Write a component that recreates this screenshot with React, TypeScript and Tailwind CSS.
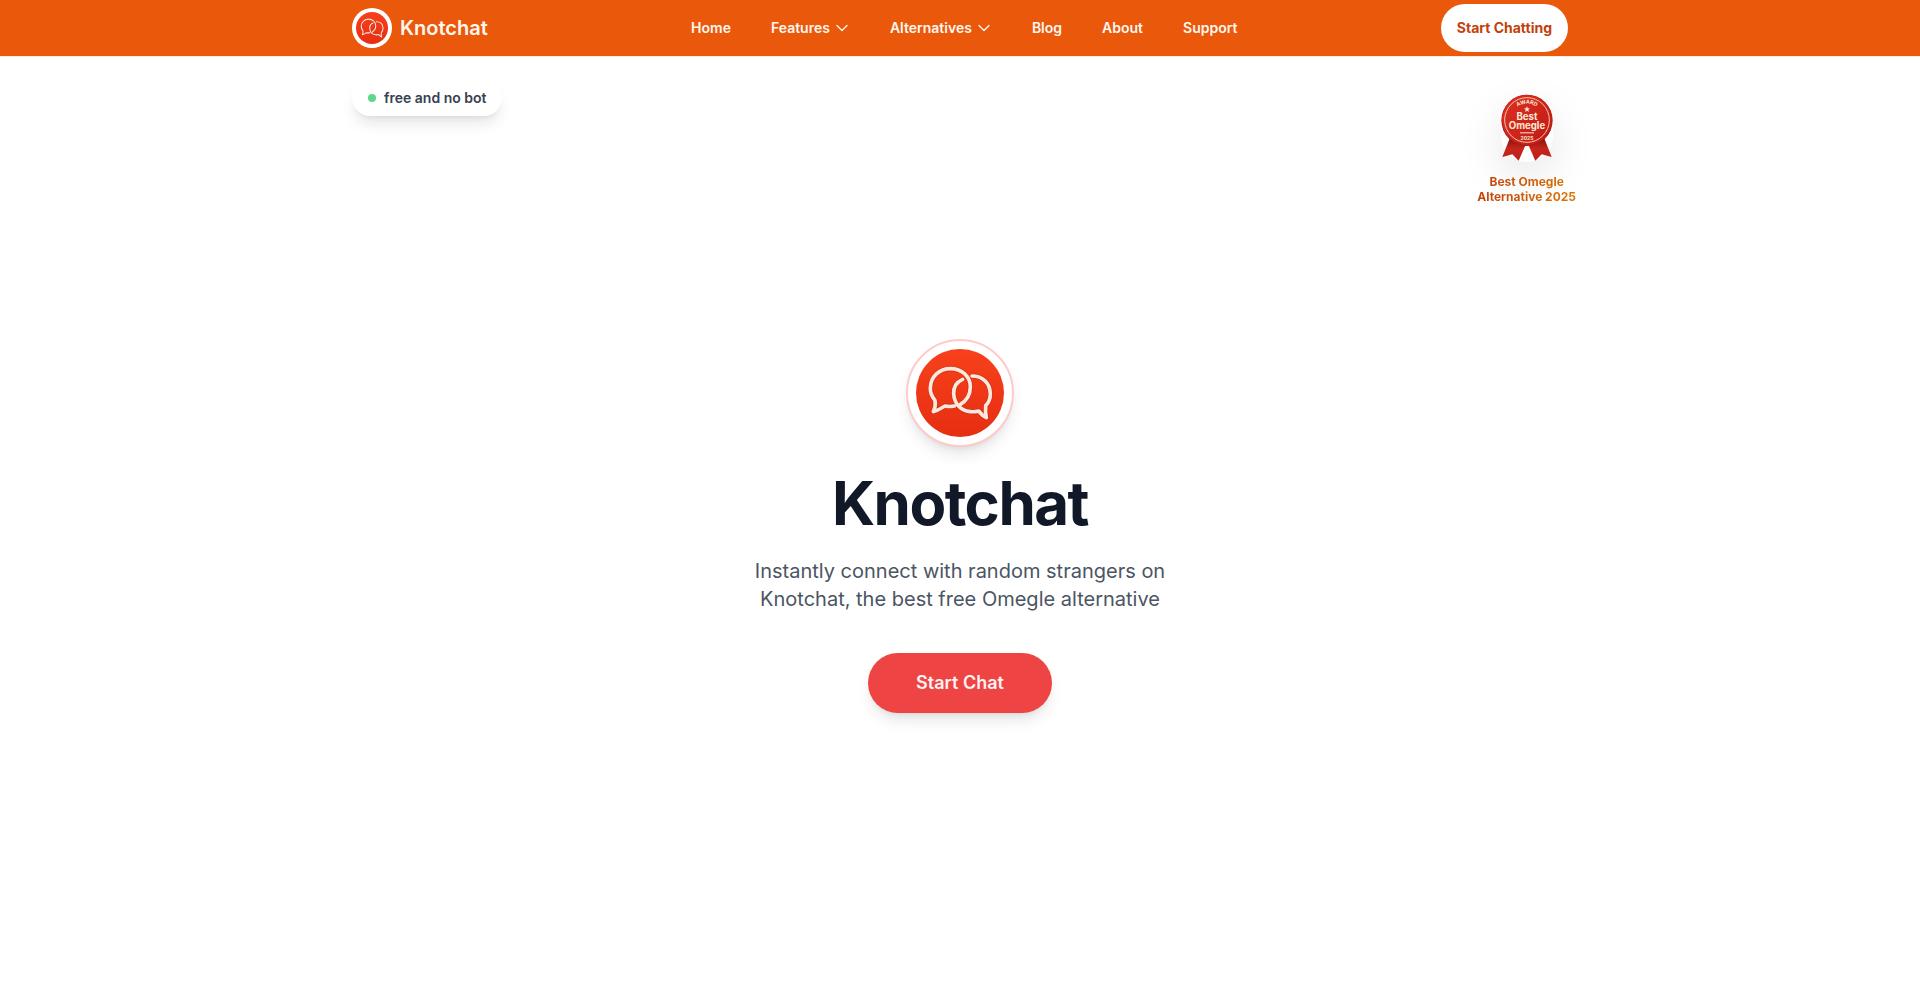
type NavItem = { label: string; menu?: boolean };

const navItems: NavItem[] = [
  { label: "Home" },
  { label: "Features", menu: true },
  { label: "Alternatives", menu: true },
  { label: "Blog" },
  { label: "About" },
  { label: "Support" },
];

function ChevronIcon() {
  return (
    <svg viewBox="0 0 24 24" className="size-4" fill="none" stroke="currentColor" strokeWidth="2" aria-hidden="true">
      <path d="M19.500 8.250 L12 15.750 L4.500 8.250" strokeLinecap="round" strokeLinejoin="round" />
    </svg>
  );
}

function ChatLogo({ id, className, stroke }: { id: string; className: string; stroke: number }) {
  const left =
    "M193 242 C183 244 173 244 165 242 C152 249 142 256 130 259 C136 247 137 235 135 225 C125 213 120 200 121 186 C123 153 148 130 181 130 C216 130 241 154 241 185 C241 207 229 227 210 238";
  const right =
    "M218 162 C200 170 190 186 191 205 C193 237 213 256 240 259 C250 260 258 259 266 257 C273 266 280 273 289 277 C286 265 286 253 287 241 C297 231 301 219 301 205 C300 173 278 152 246 152";
  return (
    <svg viewBox="78 71 264 264" className={className} aria-hidden="true">
      <defs>
        <linearGradient id={id} x1="0" y1="0" x2="0" y2="1">
          <stop offset="0" stopColor="#f8411b" />
          <stop offset="1" stopColor="#e62e12" />
        </linearGradient>
      </defs>
      <circle cx="210" cy="203" r="132" fill={`url(#${id})`} />
      <g fill="none" strokeLinejoin="round" strokeLinecap="round">
        <g stroke="#b3210c" strokeOpacity="0.45" strokeWidth={stroke + 4}>
          <path d={left} />
          <path d={right} />
        </g>
        <g stroke="#fde8dd" strokeWidth={stroke}>
          <path d={left} />
          <path d={right} />
        </g>
      </g>
    </svg>
  );
}

function AwardRibbon() {
  return (
    <svg viewBox="0 0 156 204" className="h-[68px] w-[52px]" role="img" aria-label="Award: Best Omegle 2025">
      <defs>
        <linearGradient id="medal" x1="0" y1="0" x2="1" y2="1">
          <stop offset="0" stopColor="#de3022" />
          <stop offset="1" stopColor="#be1a15" />
        </linearGradient>
        <linearGradient id="tail" x1="0" y1="0" x2="0" y2="1">
          <stop offset="0" stopColor="#7e0d0b" />
          <stop offset="0.5" stopColor="#c8261d" />
          <stop offset="1" stopColor="#bb1d17" />
        </linearGradient>
        <path id="award-arc" d="M29 78 A49 49 0 0 1 127 78" />
      </defs>
      <path d="M28 128 L4 189 L34 181 L53 200 L75 150 Z" fill="url(#tail)" />
      <path d="M128 128 L152 189 L122 181 L103 200 L81 150 Z" fill="url(#tail)" />
      <circle cx="78" cy="79" r="77" fill="#ad1913" />
      <circle cx="78" cy="78" r="75" fill="url(#medal)" />
      <circle cx="78" cy="78" r="67" fill="none" stroke="#f6c9a4" strokeWidth="3" />
      <g fill="#fdebd2" textAnchor="middle" fontFamily="Inter, sans-serif" fontWeight="700">
        <text fontSize="16">
          <textPath href="#award-arc" startOffset="50%">AWARD</textPath>
        </text>
        <path d="M78 37 L80.500 43 L87 43.500 L82 47.500 L83.500 54 L78 50.500 L72.500 54 L74 47.500 L69 43.500 L75.500 43 Z" />
        <text x="78" y="78" fontSize="29">Best</text>
        <text x="78" y="104" fontSize="29">Omegle</text>
        <rect x="57" y="115" width="42" height="3" />
        <text x="78" y="137" fontSize="15">2025</text>
      </g>
    </svg>
  );
}

export default function App() {
  return (
    <div className="flex min-h-screen flex-col bg-white font-[Inter,sans-serif]">
      <header className="bg-[#ea580c] shadow-[0_1px_0_#ffedd5]">
        <div className="mx-auto flex h-14 max-w-7xl items-center justify-between px-8">
          <a href="#home" className="flex items-center gap-2">
            <span className="rounded-full bg-white p-1">
              <ChatLogo id="logo-small" className="size-8" stroke={9} />
            </span>
            <span className="text-xl font-semibold text-[#fff7ed]">Knotchat</span>
          </a>
          <nav aria-label="Main" className="flex items-center gap-10 text-sm font-semibold text-[#fff7ed]">
            {navItems.map((item) =>
              item.menu ? (
                <button key={item.label} type="button" className="flex items-center gap-1">
                  {item.label}
                  <ChevronIcon />
                </button>
              ) : (
                <a key={item.label} href={`#${item.label.toLowerCase()}`}>
                  {item.label}
                </a>
              ),
            )}
          </nav>
          <button type="button" className="h-12 rounded-full bg-white px-4 text-sm font-bold text-[#c2410c]">
            Start Chatting
          </button>
        </div>
      </header>

      <main className="relative flex grow flex-col items-center justify-center px-8 pt-0.5">
        <div className="absolute inset-x-0 top-0 mx-auto flex max-w-7xl items-start justify-between pt-6 pr-4 pl-8">
          <div className="flex items-center gap-2 rounded-full bg-white px-4 py-2 shadow-lg">
            <span className="size-2 rounded-full bg-[#5fd68a]" />
            <span className="text-sm font-semibold text-[#374151]">free and no bot</span>
          </div>
          <div className="flex flex-col items-center gap-3 px-2 pt-[14px]">
            <div className="rounded-full shadow-[0_16px_44px_rgba(0,0,0,0.1)]">
              <AwardRibbon />
            </div>
            <p className="bg-linear-to-r from-[#c2410c] to-[#d97706] bg-clip-text text-center text-xs leading-[15px] font-bold text-transparent">
              Best Omegle
              <br />
              Alternative 2025
            </p>
          </div>
        </div>

        <div className="rounded-full border-2 border-[#fecaca] bg-white p-2 shadow-lg">
          <ChatLogo id="logo-large" className="size-[88px]" stroke={11} />
        </div>
        <h1 className="mt-[26px] text-6xl font-bold tracking-tight text-[#111827]">Knotchat</h1>
        <p className="mt-6 max-w-md text-center text-xl leading-7 text-[#4b5563]">
          Instantly connect with random strangers on Knotchat, the best free Omegle alternative
        </p>
        <button
          type="button"
          className="mt-10 h-[60px] rounded-full bg-[#ef4444] px-12 text-lg font-semibold text-[#fef2f2] shadow-lg"
        >
          Start Chat
        </button>
      </main>
    </div>
  );
}
